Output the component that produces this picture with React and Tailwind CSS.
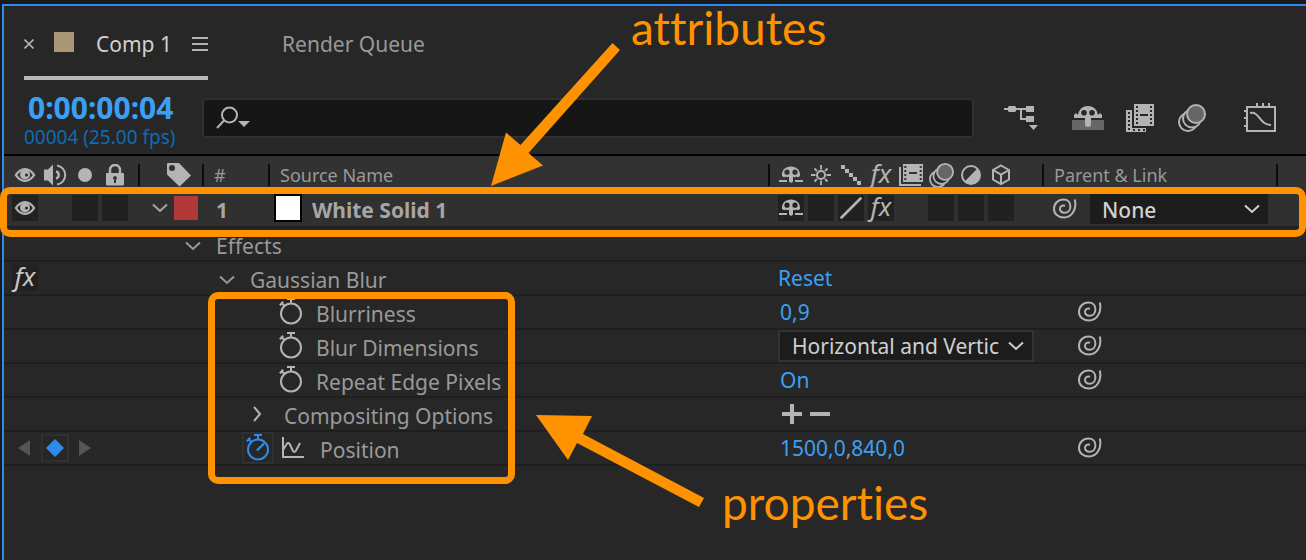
import React from "react";

const svgProps = { fill: "none", stroke: "currentColor", strokeWidth: 2, "aria-hidden": true };

const Eye = () => (
  <svg width="22" height="16" viewBox="0 0 22 16" aria-hidden="true">
    <path fillRule="evenodd" fill="#b4b4b4" d="M0.5 8 Q5 1 11 1 Q17 1 21.5 8 Q17 15 11 15 Q5 15 0.5 8Z M3.2 8 Q6.5 12.8 11 12.8 Q15.5 12.8 18.8 8 Q15.5 3.2 11 3.2 Q6.5 3.2 3.2 8Z" />
    <circle cx="11" cy="7.5" r="5" fill="#b4b4b4" />
    <circle cx="12.5" cy="8" r="1.5" fill="#2b2b2b" />
  </svg>
);

const Speaker = () => (
  <svg width="24" height="24" viewBox="0 0 24 24" {...svgProps}>
    <path d="M1 6.500H5L10 1.500V22.500L5 17.500H1Z" fill="currentColor" stroke="none" />
    <path d="M13 8.500A3.600 3.600 0 0 1 13 15.500" strokeWidth="2.400" />
    <path d="M14 2.500A9.600 9.600 0 0 1 14 21.500" />
  </svg>
);

const Dot = () => (
  <svg width="14" height="14" viewBox="0 0 14 14" aria-hidden="true"><circle cx="7" cy="7" r="7" fill="currentColor" /></svg>
);

const Lock = () => (
  <svg width="18" height="22" viewBox="0 0 18 22" {...svgProps}>
    <path d="M4 10V6a5 5 0 0 1 10 0V10" strokeWidth="2.4" />
    <rect x="0" y="9" width="18" height="12.5" rx="1" fill="currentColor" stroke="none" />
    <path d="M9 12a2 2 0 0 1 1 3.7V19H8V15.7A2 2 0 0 1 9 12Z" fill="#323232" stroke="none" />
  </svg>
);

const Tag = () => (
  <svg width="24" height="24" viewBox="0 0 24 24" aria-hidden="true">
    <path fillRule="evenodd" fill="currentColor" d="M1 0H12L24 12.5L12.500 23.500L0 11.500V1Q0 0 1 0ZM5 2A3 3 0 1 0 5 8A3 3 0 1 0 5 2Z" />
  </svg>
);

const Shy = () => (
  <svg width="24" height="18" viewBox="0 0 24 18" aria-hidden="true">
    <path fillRule="evenodd" fill="currentColor" d="M3 10C2.500 4 6.500 0.500 12 0.500S21.500 4 21 10Q19 12 17.500 10.500Q15.500 12 14 10.500V15.500Q12 18 10 15.500V10.500Q8.500 12 6.500 10.500Q5 12 3 10ZM8 3.600A2.600 2.600 0 1 0 8 8.800A2.600 2.600 0 1 0 8 3.600ZM16 3.600A2.600 2.600 0 1 0 16 8.800A2.600 2.600 0 1 0 16 3.600Z" />
    <path d="M0 14H8V16H0ZM16 14H24V16H16Z" fill="currentColor" />
  </svg>
);

const Sun = () => (
  <svg width="20" height="20" viewBox="0 0 20 20" {...svgProps}>
    <circle cx="10" cy="10" r="4" />
    <path d="M10 0V4.500M10 15.500V20M0 10H4.500M15.500 10H20M3.500 3.500L6 6M14 14L16.500 16.500M3.500 16.500L6 14M14 6L16.500 3.500" strokeWidth="1.800" />
  </svg>
);

const Steps = () => (
  <svg width="20" height="20" viewBox="0 0 20 20" aria-hidden="true">
    <path fill="currentColor" d="M0 0H4V4H0ZM4 4H8V8H4ZM8 8H12V12H8ZM12 12H16V16H12ZM16 16H20V20H16Z" />
  </svg>
);

const Slash = () => (
  <svg width="22" height="22" viewBox="0 0 22 22" {...svgProps}><path d="M1.500 20.500L20.500 1.500" strokeWidth="2.600" strokeLinecap="round" /></svg>
);

const Film = () => (
  <svg width="24" height="22" viewBox="0 0 24 22" {...svgProps}>
    <path d="M1 3V21H22" />
    <path fillRule="evenodd" fill="currentColor" stroke="none" d="M4 0H24V18H4ZM5.300 2V4H7.300V2ZM5.300 6V8H7.300V6ZM5.300 10V12H7.300V10ZM5.300 14V16H7.300V14ZM20.700 2V4H22.700V2ZM20.700 6V8H22.700V6ZM20.700 10V12H22.700V10ZM20.700 14V16H22.700V14ZM10 8V10H18V8Z" />
  </svg>
);

const MotionBlur = ({ size = 28 }) => (
  <svg width={size} height={size} viewBox="0 0 28 28" {...svgProps} className="shrink-0">
    <circle cx="10" cy="18" r="9" />
    <circle cx="14" cy="14.500" r="9" fill="#2b2b2b" />
    <circle cx="18" cy="10" r="9" fill="#666666" />
  </svg>
);

const Adjust = () => (
  <svg width="22" height="22" viewBox="0 0 22 22" {...svgProps}>
    <circle cx="11" cy="11" r="9" />
    <path d="M17.400 4.600A9 9 0 0 1 4.600 17.400Z" fill="currentColor" stroke="none" />
  </svg>
);

const Cube = () => (
  <svg width="20" height="22" viewBox="0 0 20 22" {...svgProps}>
    <path d="M10 1.500L18 6V15.500L10 20L2 15.500V6ZM2 6L10 10.500L18 6M10 10.500V20" />
  </svg>
);

const Spiral = () => (
  <svg width="24" height="22" viewBox="0 0 24 22" {...svgProps}>
    <path d="M21.800 1.500C24 11 19 19.600 11 19.600C5 19.600 1 15.800 1 11C1 5.500 5 1.500 10.500 1.500C14.800 1.500 17.400 4.500 17.400 8.300C17.400 12.300 14.800 14.800 11.500 14.800C8.500 14.800 6.800 12.800 7 10.500C7.200 8 9.500 6.800 12 7.800" />
  </svg>
);

const Stopwatch = ({ active = false }) => (
  <svg width="24" height="30" viewBox="0 0 24 30" {...svgProps} className="shrink-0">
    <circle cx="12" cy="16.500" r="10" />
    <path d="M12 2V6M8 2H16M2 5.500L5.500 9M0.800 8.200L4.200 4.800" />
    {active && <path d="M11 17.500L18 10.500" strokeWidth="2.400" />}
  </svg>
);

const Graph = () => (
  <svg width="22" height="24" viewBox="0 0 22 24" {...svgProps}>
    <path d="M1 1V21H22M1 14L5 7.500Q6.500 6 8 8.500L11 15Q12.500 17 14 14.500L18 7" />
  </svg>
);

const Chevron = ({ right = false }) =>
  right ? (
    <svg width="10" height="16" viewBox="0 0 10 16" {...svgProps}><path d="M2 1L8 8L2 15" /></svg>
  ) : (
    <svg width="16" height="10" viewBox="0 0 16 10" {...svgProps}><path d="M1 1.500L8 8L15 1.500" /></svg>
  );

const Fx = () => <span className="pb-1 text-[26px] leading-5 font-normal italic">fx</span>;

const Cell = ({ children, filled = false }) => (
  <span className={"flex h-[26px] w-[26px] shrink-0 items-center justify-center " + (filled ? "bg-[#212121]" : "")}>{children}</span>
);

const Divider = () => <span className="h-[22px] w-[2px] shrink-0 bg-[#0c0c0c]" />;

const Head = ({ children, className = "" }) => (
  <th className="h-[34px] p-0 text-left font-normal">
    <span className="flex h-[22px] items-center pt-1">
      <Divider />
      <span className={"flex items-center " + className}>{children}</span>
    </span>
  </th>
);

const line = "h-[34px] border-b-2 border-[#1f1f1f] p-0";

const Row = ({ left, name, value, link = false }) => (
  <tr>
    <td className={line}><div className="flex items-center pl-2">{left}</div></td>
    <td className={line} colSpan={3}><div className="flex h-8 items-center text-[#999999]">{name}</div></td>
    <td className={line}><div className="flex h-8 items-center pl-3 text-[#3ba0f3]">{value}</div></td>
    <td className={line} colSpan={2}>
      {link && <button type="button" aria-label="Property pick whip" className="ml-9 block"><Spiral /></button>}
    </td>
  </tr>
);

const Select = ({ label, value, className, padding }) => (
  <label className={"grid items-center text-[#d0d0d0] " + className}>
    <select aria-label={label} className={"col-start-1 row-start-1 h-full w-full appearance-none bg-[#1c1c1c] " + padding}>
      <option>{value}</option>
    </select>
    <span className="pointer-events-none col-start-1 row-start-1 mr-2 justify-self-end"><Chevron /></span>
  </label>
);

const Animated = ({ name }) => (
  <>
    <button type="button" aria-label={"Toggle animation of " + name} className="ml-[141px] text-[#b4b4b4]"><Stopwatch /></button>
    <span className="pt-1 pl-[13px]">{name}</span>
  </>
);

function Toolbar() {
  return (
    <div className="flex h-[74px] items-start">
      <div className="w-[198px] shrink-0 pt-3 pl-5">
        <div className="pl-1 text-3xl leading-8 font-bold text-[#3ba0f3]">0:00:00:04</div>
        <div className="text-[19px] leading-[26px] whitespace-nowrap text-[#0f6bb5]">00004 (25.00 fps)</div>
      </div>
      <div className="mt-[18px] flex h-10 min-w-0 flex-1 items-center rounded-sm border-2 border-[#303030] bg-[#161616] pl-3">
        <button type="button" aria-label="Search options">
          <svg width="34" height="24" viewBox="0 0 34 24" {...svgProps}>
            <circle cx="13.500" cy="9" r="7.500" />
            <path d="M8 14.500L1 22" />
            <path d="M22 15H34L28 21Z" fill="currentColor" stroke="none" />
          </svg>
        </button>
        <input aria-label="Search layers" className="h-full min-w-0 flex-1 bg-transparent px-2 outline-none" />
      </div>
      <div className="flex h-[76px] w-[332px] shrink-0 items-center pl-[30px]">
        <button type="button" aria-label="Mini-flowchart">
          <svg width="34" height="28" viewBox="0 0 34 28" {...svgProps}>
            <path d="M0 5H24M17 5V15H24" />
            <path d="M4 3L5 2H11L12 3V7L11 8H5L4 7ZM22 2H30V8H22ZM22 12H30V18H22ZM25 21H34L29.500 26Z" fill="currentColor" stroke="none" />
          </svg>
        </button>
        <button type="button" aria-label="Hide shy layers" className="ml-[34px]">
          <svg width="32" height="26" viewBox="0 0 32 26" aria-hidden="true">
            <path d="M0 15H32V25H0Z" fill="#666666" />
            <path fillRule="evenodd" fill="currentColor" d="M2 13V10L4 8L6 10C7 4 11 1 16 1S25 4 26 10L28 8L30 10V13H19V19Q19 22 16 22T13 19V13ZM12 5A2.800 2.800 0 1 0 12 10.600A2.800 2.800 0 1 0 12 5ZM20 5A2.800 2.800 0 1 0 20 10.600A2.800 2.800 0 1 0 20 5Z" />
          </svg>
        </button>
        <button type="button" aria-label="Frame blending" className="ml-[22px]">
          <svg width="28" height="28" viewBox="0 0 28 28" aria-hidden="true">
            <path fillRule="evenodd" fill="currentColor" d="M0 6H6V24H20V28H0ZM2 8V10H4V8ZM2 12V14H4V12ZM2 16V18H4V16ZM2 20V22H4V20ZM2 24V26H4V24ZM7 25V27H9V25ZM12 25V27H14V25ZM17 25V27H19V25Z" />
            <path fillRule="evenodd" fill="currentColor" d="M8 0H28V22H8ZM10 2V4H12V2ZM10 6V8H12V6ZM10 10V12H12V10ZM10 14V16H12V14ZM10 18V20H12V18ZM24 2V4H26V2ZM24 6V8H26V6ZM24 10V12H26V10ZM24 14V16H26V14ZM24 18V20H26V18ZM14 10V12H22V10Z" />
          </svg>
        </button>
        <button type="button" aria-label="Motion blur" className="ml-6"><MotionBlur /></button>
        <button type="button" aria-label="Graph editor" className="ml-[38px]">
          <svg width="32" height="32" viewBox="0 0 32 32" {...svgProps}>
            <path d="M3 5H31V29H3ZM13 1V5M19 1V5M25 1V5M0 9H3M0 16H3M0 24H3" />
            <path d="M6 11C16 9 15 23 27 23" />
          </svg>
        </button>
      </div>
    </div>
  );
}

export default function App() {
  return (
    <div className="relative min-h-screen overflow-hidden bg-[#1a1a1a] pt-1 pl-[2px] font-['Noto_Sans',sans-serif] text-[21px] leading-7 text-[#b4b4b4]">
      <main className="min-h-[556px] border-t-2 border-l-2 border-[#2d8ceb] bg-[#272727]">
        <nav className="flex h-[74px]">
          <div className="ml-5 flex h-full items-center border-b-4 border-[#b8b8b8] pt-[6px]">
            <button type="button" aria-label="Close Comp 1" className="mr-5">
              <svg width="10" height="12" viewBox="0 0 10 12" {...svgProps} strokeWidth="1.600"><path d="M0.500 1.500L9.500 10.500M9.500 1.500L0.500 10.500" /></svg>
            </button>
            <span className="mb-1 h-5 w-5 bg-[#a99775]" />
            <a href="#comp" className="ml-[22px] w-24 whitespace-nowrap text-[#d0d0d0]">Comp 1</a>
            <button type="button" aria-label="Panel menu">
              <svg width="16" height="14" viewBox="0 0 16 14" aria-hidden="true"><path d="M0 0H16V2H0ZM0 6H16V8H0ZM0 12H16V14H0Z" fill="currentColor" /></svg>
            </button>
          </div>
          <a href="#queue" className="ml-[74px] flex h-[74px] items-center pt-[2px] text-[#999999]">Render Queue</a>
        </nav>

        <Toolbar />

        <table className="w-full table-fixed border-separate border-spacing-0 border-t-2 border-black">
          <colgroup>
            <col className="w-[134px]" />
            <col className="w-[64px]" />
            <col className="w-[66px]" />
            <col />
            <col className="w-[274px]" />
            <col className="w-[234px]" />
            <col className="w-[30px]" />
          </colgroup>
          <thead className="bg-[#323232] text-lg">
            <tr>
              <th className="h-[34px] p-0 font-normal">
                <span className="flex gap-1 pt-1 pl-2">
                  <Cell><Eye /></Cell><Cell><Speaker /></Cell><Cell><Dot /></Cell><Cell><Lock /></Cell>
                </span>
              </th>
              <Head className="pl-[27px]"><Tag /></Head>
              <Head className="pl-[10px] text-[#999999]">#</Head>
              <Head className="pl-[10px] text-[#999999]">Source Name</Head>
              <Head className="gap-1 pl-2">
                <Cell><Shy /></Cell><Cell><Sun /></Cell><Cell><Steps /></Cell><Cell><Fx /></Cell>
                <Cell><Film /></Cell><Cell><MotionBlur size={25} /></Cell><Cell><Adjust /></Cell><Cell><Cube /></Cell>
              </Head>
              <Head className="pl-[10px] text-[#999999]">Parent &amp; Link</Head>
              <Head />
            </tr>
          </thead>
          <tbody>
            <tr className="bg-[#303030] font-bold text-[#a6a6a6]">
              <td className="h-[38px] border-b-2 border-[#1f1f1f] p-0">
                <div className="flex gap-1 pl-2"><Cell filled><Eye /></Cell><Cell /><Cell filled /><Cell filled /></div>
              </td>
              <td className="border-b-2 border-[#1f1f1f] p-0">
                <div className="flex items-center gap-[6px] pl-[14px]">
                  <button type="button" aria-label="Collapse layer" className="w-4"><Chevron /></button>
                  <span className="h-6 w-6 bg-[#b23939]" />
                </div>
              </td>
              <td className="border-b-2 border-[#1f1f1f] p-0 pt-1 pl-[14px]">1</td>
              <td className="border-b-2 border-[#1f1f1f] p-0">
                <div className="flex items-center gap-[10px] pl-[6px]">
                  <span className="h-7 w-7 border-2 border-black bg-white" /><span className="pt-1 leading-6">White Solid 1</span>
                </div>
              </td>
              <td className="border-b-2 border-[#1f1f1f] p-0 font-normal text-[#b4b4b4]">
                <div className="flex gap-1 pl-[10px]">
                  <Cell filled><Shy /></Cell><Cell filled /><Cell filled><Slash /></Cell><Cell filled><Fx /></Cell>
                  <Cell /><Cell filled /><Cell filled /><Cell filled />
                </div>
              </td>
              <td className="border-b-2 border-[#1f1f1f] p-0">
                <div className="flex items-center pl-[11px] font-medium text-[#b4b4b4]">
                  <button type="button" aria-label="Parent pick whip" className="pt-[2px]"><Spiral /></button>
                  <Select label="Parent" value="None" className="ml-[13px] h-7 w-[178px]" padding="pt-[2px] pl-3" />
                </div>
              </td>
              <td className="border-b-2 border-[#1f1f1f] p-0" />
            </tr>
            <Row name={<><span className="ml-[47px] w-[31px] pt-1"><Chevron /></span><span className="pt-1">Effects</span></>} />
            <Row
              left={<span className="text-[#c8c8c8]"><Cell filled><Fx /></Cell></span>}
              name={<><span className="ml-[81px] w-[31px] pt-1"><Chevron /></span><span className="pt-1">Gaussian Blur</span></>}
              value={<button type="button" className="-ml-[2px]">Reset</button>}
            />
            <Row name={<Animated name="Blurriness" />} value="0,9" link />
            <Row
              name={<Animated name="Blur Dimensions" />}
              value={<Select label="Blur Dimensions" value="Horizontal and Vertic" className="-ml-[2px] h-8 w-64 border-2 border-[#333333]" padding="pl-3" />}
              link
            />
            <Row name={<Animated name="Repeat Edge Pixels" />} value="On" link />
            <Row
              name={<><span className="ml-[114px] w-8 text-[#b4b4b4]"><Chevron right /></span><span className="pt-1">Compositing Options</span></>}
              value={
                <span className="flex gap-2 pl-[2px] text-[#b4b4b4]">
                  <button type="button" aria-label="Add"><svg width="20" height="20" viewBox="0 0 20 20" aria-hidden="true"><path d="M8 0H12V8H20V12H12V20H8V12H0V8H8Z" fill="currentColor" /></svg></button>
                  <button type="button" aria-label="Remove"><svg width="20" height="20" viewBox="0 0 20 20" aria-hidden="true"><path d="M0 8H20V12H0Z" fill="currentColor" /></svg></button>
                </span>
              }
            />
            <Row
              left={
                <span className="flex items-center gap-[10px] pl-[5px] text-[#555555]">
                  <button type="button" aria-label="Previous keyframe"><svg width="14" height="16" viewBox="0 0 14 16" aria-hidden="true"><path d="M1 8L13 0V16Z" fill="currentColor" /></svg></button>
                  <button type="button" aria-label="Toggle keyframe" className="flex h-7 w-7 items-center justify-center border-2 border-[#303030]">
                    <svg width="18" height="18" viewBox="0 0 18 18" aria-hidden="true"><path d="M9 0L18 9L9 18L0 9Z" fill="#2d8ceb" /></svg>
                  </button>
                  <button type="button" aria-label="Next keyframe"><svg width="12" height="16" viewBox="0 0 12 16" aria-hidden="true"><path d="M0 0L12 8L0 16Z" fill="currentColor" /></svg></button>
                </span>
              }
              name={
                <>
                  <button type="button" aria-label="Toggle animation of Position" className="ml-[104px] flex h-8 w-8 items-center justify-center border-2 border-[#303030] text-[#2d8ceb]"><Stopwatch active /></button>
                  <button type="button" aria-label="Include in graph editor" className="ml-2 text-[#b4b4b4]"><Graph /></button>
                  <span className="pt-1 pl-4">Position</span>
                </>
              }
              value={<span>1500,0<span className="text-[#999999]">,</span>840,0</span>}
              link
            />
          </tbody>
        </table>
      </main>

      <div className="pointer-events-none absolute inset-x-0 top-[187px] h-[50px] rounded-[10px] border-[7px] border-[#ff9200]" />
      <div className="pointer-events-none absolute top-[292px] left-[208px] h-[192px] w-[307px] rounded-[10px] border-[7px] border-[#ff9200]" />
      <svg className="pointer-events-none absolute top-0 left-0" width="1306" height="560" viewBox="0 0 1306 560" aria-hidden="true">
        <path d="M612.500 43L620 50L528.500 153L543 165.500L491 186L506 132.500L520.500 145Z" fill="#ff9200" />
        <path d="M536 415L592 416L583 434L704 498L699 507L577 443L568 460Z" fill="#ff9200" />
      </svg>
      <p className="pointer-events-none absolute top-0 left-[631px] font-['Lato',sans-serif] text-[46px] leading-[56px] text-[#ff9200] [font-variant-ligatures:none]">attributes</p>
      <p className="pointer-events-none absolute top-[475px] left-[722px] font-['Lato',sans-serif] text-[46px] leading-[56px] text-[#ff9200] [font-variant-ligatures:none]">properties</p>
    </div>
  );
}
